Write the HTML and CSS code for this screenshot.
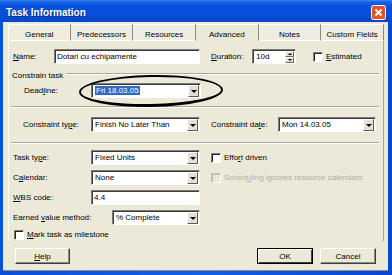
FILE: index.html
```html
<!DOCTYPE html>
<html lang="en">
<head>
<meta charset="UTF-8" />
<title>Task Information</title>
<link rel="stylesheet" href="styles.css">
</head>
<body>

<div class="window">
  <div class="titlebar">
    <span class="title">Task Information</span>
    <span class="close">
      <svg width="15" height="15" viewBox="0 0 15 15">
        <rect x="0.5" y="0.5" width="14" height="14" rx="2" fill="#e2552c" stroke="#fff"/>
        <path d="M4.5 4.5 L10.5 10.5 M10.5 4.5 L4.5 10.5" stroke="#fff" stroke-width="1.8"/>
      </svg>
    </span>
  </div>

  <div class="client">
    <div class="tabs">
      <div class="tab">General</div>
      <div class="tab">Predecessors</div>
      <div class="tab">Resources</div>
      <div class="tab active">Advanced</div>
      <div class="tab">Notes</div>
      <div class="tab">Custom Fields</div>
    </div>

    <div class="panel">
      <div class="row name-row">
        <span class="lbl lbl-name"><u>N</u>ame:</span>
        <div class="field name-field">Dotari cu echipamente</div>
        <span class="lbl lbl-dur"><u>D</u>uration:</span>
        <div class="field spin-field">
          <span class="val">10d</span>
          <span class="spin"><i class="up"></i><i class="down"></i></span>
        </div>
        <span class="check est"><span class="box"></span><span><u>E</u>stimated</span></span>
      </div>

      <div class="group-title">
        <span>Constrain task</span>
        <i class="etch-line"></i>
      </div>

      <div class="row deadline-row">
        <span class="lbl lbl-deadline">Dead<u>l</u>ine:</span>
        <div class="field combo w-deadline">
          <span class="val"><span class="sel">Fri 18.03.05</span></span>
          <span class="arrow"></span>
        </div>
        <div class="ellipse"></div>
      </div>

      <div class="etch"></div>

      <div class="row constraint-row">
        <span class="lbl lbl-ctype">Constraint ty<u>p</u>e:</span>
        <div class="field combo w-main">
          <span class="val">Finish No Later Than</span>
          <span class="arrow"></span>
        </div>
        <span class="lbl lbl-cdate">Constraint da<u>t</u>e:</span>
        <div class="field combo w-date">
          <span class="val">Mon 14.03.05</span>
          <span class="arrow"></span>
        </div>
      </div>

      <div class="etch"></div>

      <div class="row lower first">
        <span class="lbl lbl-low">Task ty<u>p</u>e:</span>
        <div class="field combo w-main">
          <span class="val">Fixed Units</span>
          <span class="arrow"></span>
        </div>
        <span class="check side"><span class="box"></span><span>Effo<u>r</u>t driven</span></span>
      </div>

      <div class="row lower">
        <span class="lbl lbl-low">C<u>a</u>lendar:</span>
        <div class="field combo w-main">
          <span class="val">None</span>
          <span class="arrow"></span>
        </div>
        <span class="check side disabled"><span class="box"></span><span>Sched<u>u</u>ling ignores resource calendars</span></span>
      </div>

      <div class="row lower">
        <span class="lbl lbl-low"><u>W</u>BS code:</span>
        <div class="field w-main">4.4</div>
      </div>

      <div class="row lower">
        <span class="lbl lbl-earned">Earned <u>v</u>alue method:</span>
        <div class="field combo w-earned">
          <span class="val">% Complete</span>
          <span class="arrow"></span>
        </div>
      </div>

      <div class="row milestone">
        <span class="check"><span class="box"></span><span><u>M</u>ark task as milestone</span></span>
      </div>
    </div>

    <div class="buttons">
      <button class="btn help"><u>H</u>elp</button>
      <div class="btn-group">
        <button class="btn default">OK</button>
        <button class="btn">Cancel</button>
      </div>
    </div>
  </div>
</div>

</body>
</html>
```

FILE: styles.css
```css
* { box-sizing: border-box; }

body {
  margin: 0;
  width: 392px;
  height: 275px;
  overflow: hidden;
  font-family: "Liberation Sans", Arial, sans-serif;
  font-size: 8px;
  color: #000;
  background: #0846d6;
}
u { text-decoration: underline; text-underline-offset: 1px; }

.window {
  height: 275px;
  display: flex;
  flex-direction: column;
  background: linear-gradient(90deg, #0a4fdc, #1060ea 50%, #0846d6);
}

/* title bar */
.titlebar {
  height: 22px;
  display: flex;
  align-items: center;
  justify-content: space-between;
  padding: 2px 6px 0 6px;
  background: linear-gradient(#3f86f0 0, #1462e8 2px, #0852dc 6px, #064fd8 60%, #0846c8 100%);
}
.title {
  color: #fff;
  font-weight: bold;
  font-size: 10px;
  text-shadow: 1px 1px 0 #0a2a8a;
}
.close { display: flex; }

/* client area */
.client {
  flex: 1;
  margin: 0 4px 4px 3px;
  background: #ece9d8;
  padding: 2px 4px 0 5px;
  display: flex;
  flex-direction: column;
  border-bottom: 1px solid #8e8c82;
}

.tabs {
  display: grid;
  grid-template-columns: repeat(6, 1fr);
  height: 17px;
}
.tab {
  display: flex;
  align-items: center;
  justify-content: center;
  padding-top: 3px;
  background: #efede2;
  border-top: 1px solid #fff;
  border-right: 1px solid #8c8a80;
  border-bottom: 1px solid #fff;
}
.tab:first-child { border-left: 1px solid #fff; }
.tab.active {
  background: #ece9d8;
  border-bottom-color: #ece9d8;
}

.panel {
  display: flex;
  flex-direction: column;
  border-left: 1px solid #fff;
  border-right: 1px solid #a8a698;
}

.row {
  display: flex;
  align-items: center;
  height: 15px;
  position: relative;
}
.lbl { flex: none; }

.name-row { margin-top: 8px; padding-left: 4px; }
.lbl-name { width: 41px; }
.name-field { width: 146px; }
.lbl-dur { width: 41px; margin-left: 11px; }
.spin-field { width: 44px; }
.est { margin-left: 17px; }

.group-title {
  display: flex;
  align-items: center;
  gap: 3px;
  height: 12px;
  margin-top: 5px;
  padding: 0 4px 0 3px;
}
.etch-line {
  flex: 1;
  height: 2px;
  margin-top: -3px;
  border-top: 1px solid #aca899;
  border-bottom: 1px solid #fff;
}

.deadline-row { margin-top: 2px; padding-left: 15px; }
.lbl-deadline { width: 67px; }
.w-deadline { width: 110px; }

.etch {
  height: 2px;
  margin: 8px 4px 0 2px;
  border-top: 1px solid #aca899;
  border-bottom: 1px solid #fff;
}

.constraint-row { margin-top: 9px; padding-left: 14px; }
.lbl-ctype { width: 68px; }
.w-main { width: 109px; }
.lbl-cdate { width: 67px; margin-left: 11px; }
.w-date { width: 98px; }

.constraint-row + .etch { margin-top: 10px; }

.lower { margin-top: 5px; padding-left: 4px; }
.lower.first { margin-top: 6px; }
.lbl-low { width: 78px; }
.lbl-earned { width: 99px; }
.w-earned { width: 88px; }
.side { margin-left: 11px; }

.milestone { margin-top: 3px; height: 13px; padding-left: 5px; }

/* fields */
.field {
  height: 15px;
  display: flex;
  align-items: center;
  padding-left: 2px;
  background: #fff;
  border: 1px solid;
  border-color: #7a7a7a #fff #fff #7a7a7a;
  box-shadow: inset 1px 1px 0 #3c3c3c;
  flex: none;
  white-space: nowrap;
  overflow: hidden;
}
.field .val { flex: 1; padding-left: 1px; }
.combo { padding-right: 1px; }
.sel {
  background: #316ac5;
  color: #fff;
  padding: 0 1px;
}
.arrow {
  flex: none;
  width: 11px;
  height: 12px;
  margin-top: 1px;
  background: #e4e1d4;
  border: 1px solid;
  border-color: #fff #5a5a5a #5a5a5a #fff;
  display: flex;
  align-items: center;
  justify-content: center;
}
.arrow::after {
  content: "";
  border-left: 3px solid transparent;
  border-right: 3px solid transparent;
  border-top: 3px solid #000;
}
.spin {
  flex: none;
  width: 9px;
  height: 12px;
  margin: 1px 1px 0 0;
  display: flex;
  flex-direction: column;
}
.spin i {
  flex: 1;
  background: #e4e1d4;
  border: 1px solid;
  border-color: #fff #6a6a6a #6a6a6a #fff;
  display: flex;
  align-items: center;
  justify-content: center;
}
.spin .up::after {
  content: "";
  border-left: 2px solid transparent;
  border-right: 2px solid transparent;
  border-bottom: 2px solid #000;
}
.spin .down::after {
  content: "";
  border-left: 2px solid transparent;
  border-right: 2px solid transparent;
  border-top: 2px solid #000;
}

/* checkbox */
.check {
  display: flex;
  align-items: center;
  gap: 2px;
  white-space: nowrap;
}
.box {
  width: 10px;
  height: 10px;
  background: #fff;
  border: 1px solid;
  border-color: #808080 #fff #fff #808080;
  box-shadow: inset 1px 1px 0 #202020;
  margin-right: 1px;
}
.disabled { color: #b0ad9f; }
.disabled .box {
  background: #ece9d8;
  box-shadow: inset 1px 1px 0 #b8b5a8;
  border-color: #c8c5b8 #fff #fff #c8c5b8;
}

/* the hand-drawn mark round the deadline */
.ellipse {
  position: absolute;
  left: 70px;
  top: -8px;
  width: 144px;
  height: 32px;
  border: 2.5px solid #000;
  border-bottom-width: 3px;
  border-radius: 50%;
  transform: rotate(-1deg);
  pointer-events: none;
}

/* buttons */
.buttons {
  display: flex;
  justify-content: space-between;
  margin-top: 7px;
  padding: 0 8px 0 7px;
}
.btn-group { display: flex; gap: 7px; }
.btn {
  width: 56px;
  height: 16px;
  padding: 0;
  font: inherit;
  color: #000;
  background: #ece9d8;
  border: 1px solid;
  border-color: #fff #404040 #404040 #fff;
  box-shadow: inset -1px -1px 0 #8c8a80;
}
.btn.help { width: 55px; }
.btn.default {
  outline: 1px solid #000;
  outline-offset: -1px;
  border-color: #000;
  box-shadow: inset 1px 1px 0 #fff, inset -1px -1px 0 #404040;
}
```
